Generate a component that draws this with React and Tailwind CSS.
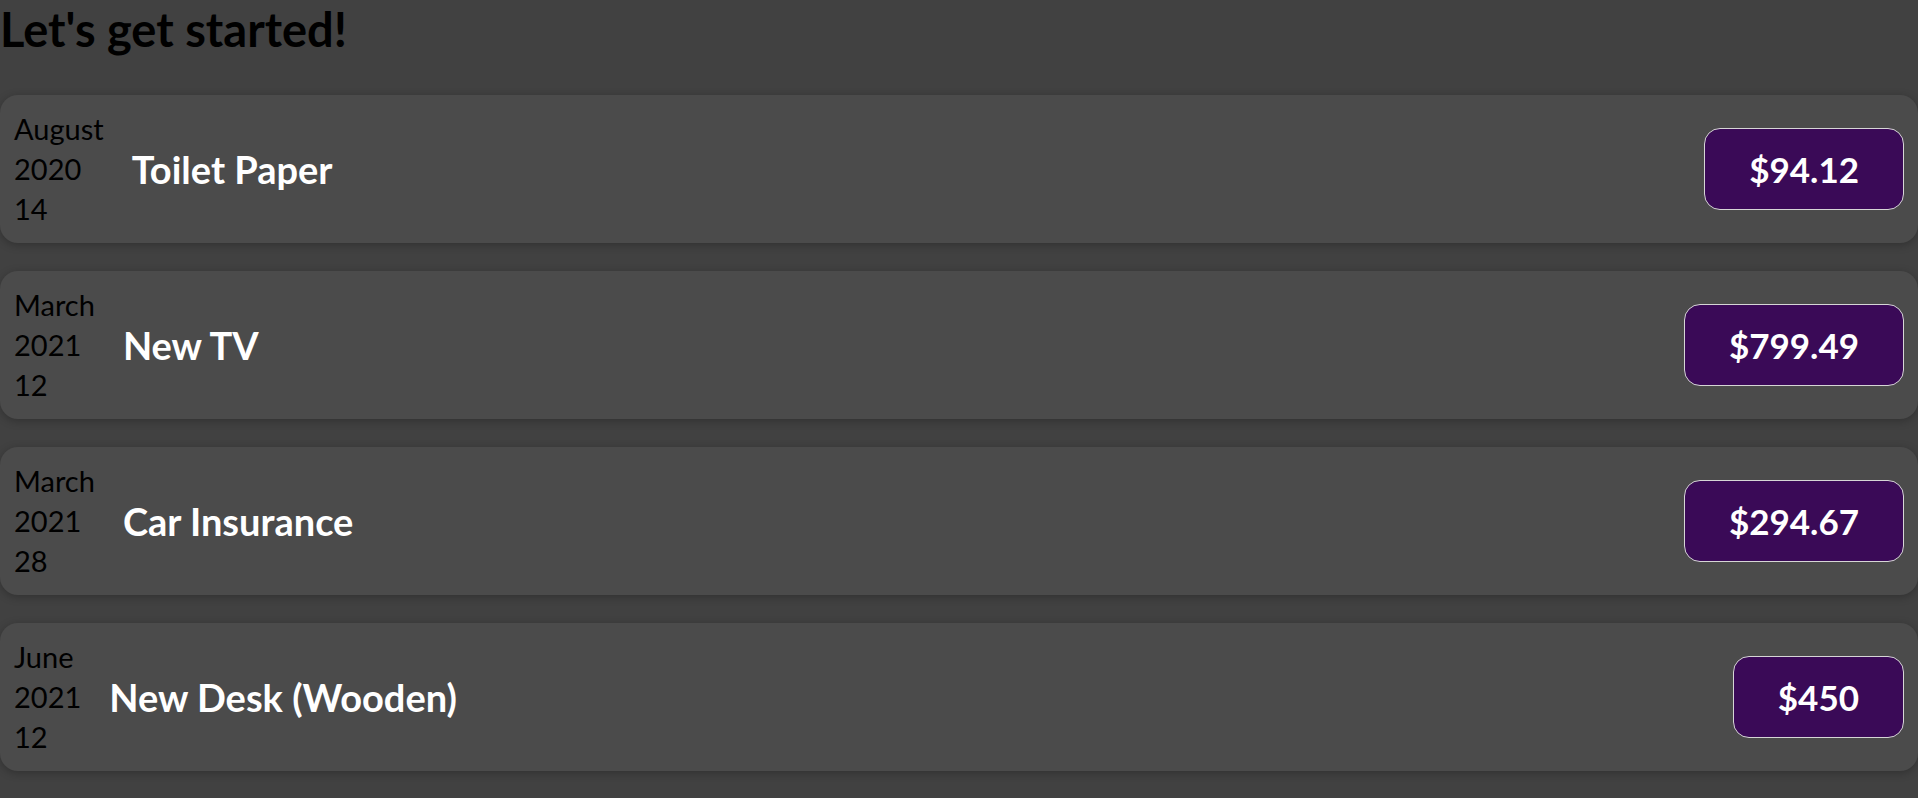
const expenses = [
  { month: 'August', year: '2020', day: '14', title: 'Toilet Paper', amount: '$94.12' },
  { month: 'March', year: '2021', day: '12', title: 'New TV', amount: '$799.49' },
  { month: 'March', year: '2021', day: '28', title: 'Car Insurance', amount: '$294.67' },
  { month: 'June', year: '2021', day: '12', title: 'New Desk (Wooden)', amount: '$450' },
];

function ExpenseItem({ month, year, day, title, amount }) {
  return (
    <div className="flex items-center gap-[28px] rounded-[18px] bg-[#4b4b4b] px-[14px] py-[14px] shadow-[0_2px_8px_rgba(0,0,0,0.25)]">
      <div className="flex flex-col text-[29px] leading-[40px] text-black">
        <div>{month}</div>
        <div>{year}</div>
        <div>{day}</div>
      </div>
      <h2 className="text-[38px] font-bold text-white">{title}</h2>
      <div className="ml-auto flex h-[82px] items-center rounded-[16px] border border-[#d6d6d6] bg-[#3a0a57] px-[44px] text-[35px] font-bold text-white">
        {amount}
      </div>
    </div>
  );
}

export default function App() {
  return (
    <div className="min-h-screen bg-[#414141] pb-[26px] font-['Lato',sans-serif]">
      <h1 className="text-[47px] font-bold leading-[58px] text-black">Let's get started!</h1>
      <div className="mt-[37px] flex flex-col gap-[28px]">
        {expenses.map((item) => (
          <ExpenseItem key={item.title} {...item} />
        ))}
      </div>
    </div>
  );
}
